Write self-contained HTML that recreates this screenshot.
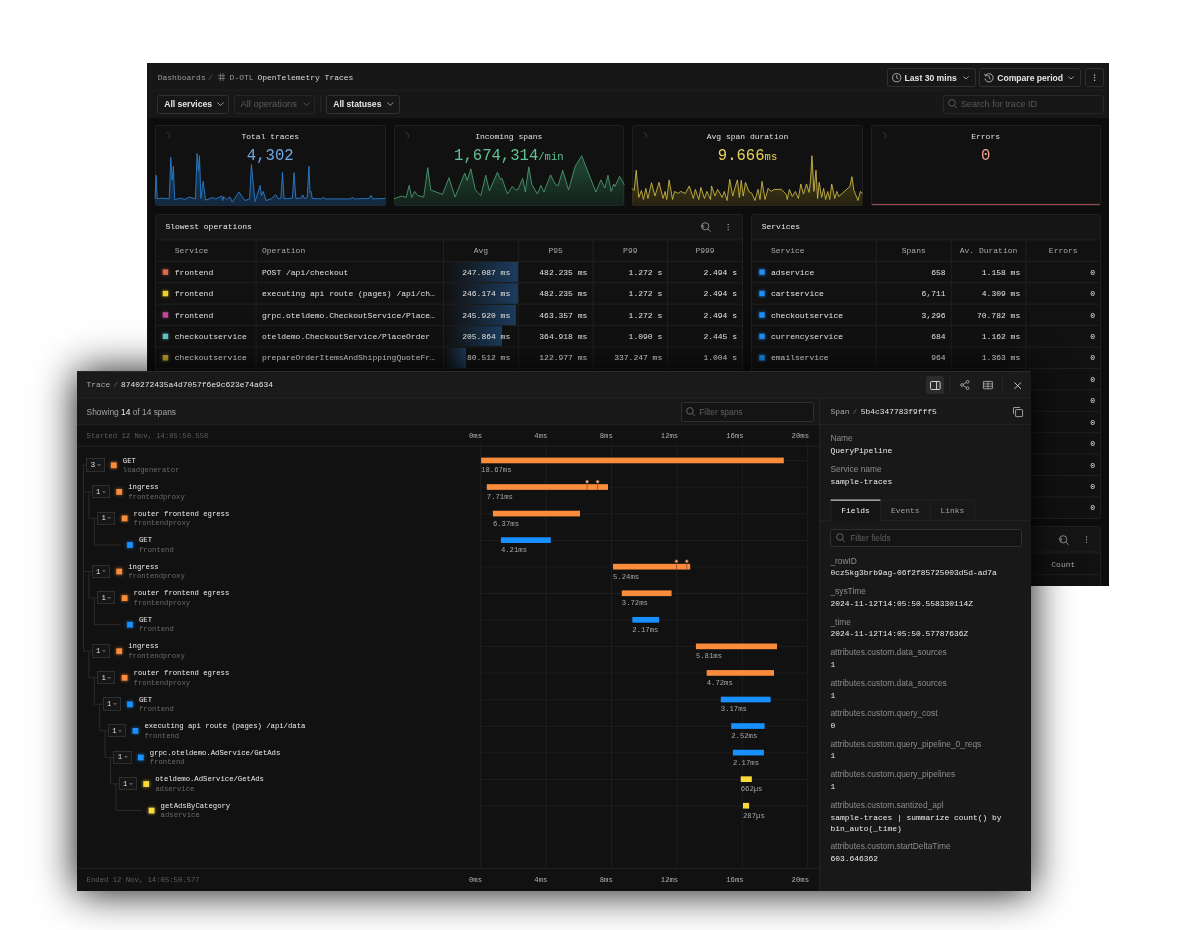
<!DOCTYPE html>
<html lang="en"><head><meta charset="utf-8"><title>OpenTelemetry Traces</title>
<style>
html,body{margin:0;padding:0;background:#fff}
body{width:1188px;height:930px;position:relative;overflow:hidden}
.pn{position:absolute;overflow:hidden}
.pn div,.pn svg{position:absolute}
.tl{left:0;top:0;width:100%;height:100%;will-change:transform}
.m{font-family:"Liberation Mono","DejaVu Sans Mono",monospace;font-size:7.92px;white-space:nowrap;letter-spacing:0}
.s{font-family:"Liberation Sans","DejaVu Sans",sans-serif;font-size:8.6px;white-space:nowrap}
#front .s{font-size:8.4px}
.sb{font-weight:bold}
svg{overflow:visible}
.ly{left:0;top:0}
</style></head>
<body>
<div class="pn" id="back" style="left:147px;top:63px;width:962px;height:523px;background:#0d0d0d">
<div style="left:0.00px;top:0.00px;width:962.00px;height:55.00px;background:#171717"></div>
<svg style="left:71.10px;top:10.40px;" width="7.4" height="8.2" viewBox="0 0 7.4 8.2"><path d="M2.4 0.2V8M5.0 0.2V8M0.2 2.7H7.2M0.2 5.5H7.2" stroke="#808080" stroke-width="0.8" fill="none"/></svg>
<div style="left:740.40px;top:5.30px;width:88.20px;height:18.40px;border:1px solid #303030;border-radius:2.5px;background:transparent;box-sizing:border-box"></div>
<svg style="left:744.90px;top:10.10px;" width="9.4" height="9.4" viewBox="0 0 9.4 9.4"><circle cx="4.7" cy="4.7" r="4.1" stroke="#ccc" stroke-width="0.8" fill="none"/><path d="M4.7 2.2V4.9L6.4 5.9" stroke="#ccc" stroke-width="0.8" fill="none"/></svg>
<svg style="left:816.20px;top:13.00px;" width="6.0" height="4.0" viewBox="0 0 6.0 4.0"><path d="M0.4 0.5L3.00 3.00L5.60 0.5" stroke="#aaa" stroke-width="0.9" fill="none"/></svg>
<div style="left:832.40px;top:5.30px;width:101.40px;height:18.40px;border:1px solid #303030;border-radius:2.5px;background:transparent;box-sizing:border-box"></div>
<svg style="left:837.00px;top:10.00px;" width="9.8" height="9.6" viewBox="0 0 9.8 9.6"><path d="M1.6 2.6A4.1 4.1 0 1 1 1.0 5.6" stroke="#ccc" stroke-width="0.8" fill="none"/><path d="M0.6 0.9L1.5 2.9L3.6 2.5" stroke="#ccc" stroke-width="0.8" fill="none"/><path d="M5 2.4V5L6.6 6" stroke="#ccc" stroke-width="0.8" fill="none"/></svg>
<svg style="left:921.00px;top:13.00px;" width="6.0" height="4.0" viewBox="0 0 6.0 4.0"><path d="M0.4 0.5L3.00 3.00L5.60 0.5" stroke="#aaa" stroke-width="0.9" fill="none"/></svg>
<div style="left:938.40px;top:5.30px;width:18.40px;height:18.40px;border:1px solid #303030;border-radius:2.5px;background:transparent;box-sizing:border-box"></div>
<div style="left:10.40px;top:31.50px;width:72.10px;height:19.30px;border:1px solid #303030;border-radius:2.5px;background:transparent;box-sizing:border-box"></div>
<svg style="left:70.00px;top:39.35px;" width="7.0" height="4.5" viewBox="0 0 7.0 4.5"><path d="M0.4 0.5L3.50 3.50L6.60 0.5" stroke="#aaa" stroke-width="0.9" fill="none"/></svg>
<div style="left:86.70px;top:31.50px;width:81.10px;height:19.30px;border:1px solid #262626;border-radius:2.5px;background:transparent;box-sizing:border-box"></div>
<svg style="left:155.50px;top:39.33px;" width="7.100000000000023" height="4.550000000000011" viewBox="0 0 7.100000000000023 4.550000000000011"><path d="M0.4 0.5L3.55 3.55L6.70 0.5" stroke="#555" stroke-width="0.9" fill="none"/></svg>
<div style="left:179.40px;top:31.50px;width:73.30px;height:19.30px;border:1px solid #303030;border-radius:2.5px;background:transparent;box-sizing:border-box"></div>
<svg style="left:239.70px;top:39.45px;" width="6.600000000000023" height="4.300000000000011" viewBox="0 0 6.600000000000023 4.300000000000011"><path d="M0.4 0.5L3.30 3.30L6.20 0.5" stroke="#aaa" stroke-width="0.9" fill="none"/></svg>
<div style="left:796.30px;top:31.50px;width:160.50px;height:19.30px;border:1px solid #282828;border-radius:2.5px;background:transparent;box-sizing:border-box"></div>
<svg style="left:801.00px;top:36.40px;" width="9.4" height="9.6" viewBox="0 0 9.4 9.6"><circle cx="3.9" cy="3.9" r="3.3" stroke="#666" stroke-width="0.8" fill="none"/><path d="M6.3 6.4L8.9 9.1" stroke="#666" stroke-width="0.8" fill="none"/></svg>
<div style="left:0.00px;top:55.00px;width:962.00px;height:468.00px;background:#0d0d0d"></div>
<div style="left:8.00px;top:62.30px;width:230.50px;height:80.50px;background:#111111;border:1px solid #202020;border-radius:2.5px;box-sizing:border-box;overflow:hidden"></div>
<svg style="left:8.00px;top:62.30px;" width="230.50" height="80.50" viewBox="0 0 230.50 80.50"><defs><linearGradient id="g0" x1="0" y1="0" x2="0" y2="1"><stop offset="0.3" stop-color="rgba(26,92,160,0.55)"/><stop offset="1" stop-color="rgba(22,72,128,0.42)"/></linearGradient></defs><polygon points="0.00,80.50 0.05,73.89 1.06,50.26 2.27,73.89 7.12,73.08 14.19,73.89 15.81,32.48 17.22,55.31 18.43,41.16 19.65,74.50 26.31,73.08 29.34,74.50 34.39,72.07 40.45,73.89 42.07,28.44 43.48,45.21 44.49,30.66 45.91,73.49 48.13,56.32 50.56,75.10 57.63,72.48 60.66,73.89 66.72,71.06 67.73,75.51 68.74,71.47 71.77,74.50 74.80,71.87 77.42,77.12 83.89,67.02 89.95,75.51 94.60,73.89 96.41,39.55 100.05,76.52 105.10,60.36 106.52,70.46 108.13,66.42 111.16,75.51 116.21,73.89 120.66,69.45 123.28,73.89 125.91,73.08 127.53,47.23 129.14,73.89 137.42,73.08 139.04,47.63 140.86,73.49 146.11,73.08 147.73,69.85 149.34,73.49 152.17,72.48 153.99,41.16 155.00,67.43 156.01,66.42 157.22,73.49 166.72,73.89 168.33,72.07 169.95,73.89 196.01,73.89 197.42,72.07 199.04,73.89 214.19,73.49 216.01,70.46 217.83,73.89 230.35,73.49 230.50,80.50" fill="url(#g0)"/><polyline points="0.05,73.89 1.06,50.26 2.27,73.89 7.12,73.08 14.19,73.89 15.81,32.48 17.22,55.31 18.43,41.16 19.65,74.50 26.31,73.08 29.34,74.50 34.39,72.07 40.45,73.89 42.07,28.44 43.48,45.21 44.49,30.66 45.91,73.49 48.13,56.32 50.56,75.10 57.63,72.48 60.66,73.89 66.72,71.06 67.73,75.51 68.74,71.47 71.77,74.50 74.80,71.87 77.42,77.12 83.89,67.02 89.95,75.51 94.60,73.89 96.41,39.55 100.05,76.52 105.10,60.36 106.52,70.46 108.13,66.42 111.16,75.51 116.21,73.89 120.66,69.45 123.28,73.89 125.91,73.08 127.53,47.23 129.14,73.89 137.42,73.08 139.04,47.63 140.86,73.49 146.11,73.08 147.73,69.85 149.34,73.49 152.17,72.48 153.99,41.16 155.00,67.43 156.01,66.42 157.22,73.49 166.72,73.89 168.33,72.07 169.95,73.89 196.01,73.89 197.42,72.07 199.04,73.89 214.19,73.49 216.01,70.46 217.83,73.89 230.35,73.49" fill="none" stroke="#2a7fd0" stroke-width="0.85" stroke-linejoin="round"/></svg>
<svg style="left:16.00px;top:69.00px;" width="8" height="8" viewBox="0 0 8 8"><path d="M3.4 0.6A3.3 3.3 0 0 1 5.6 6.4" stroke="#3c3c3c" stroke-width="0.9" fill="none"/></svg>
<div style="left:246.60px;top:62.30px;width:230.40px;height:80.50px;background:#111111;border:1px solid #202020;border-radius:2.5px;box-sizing:border-box;overflow:hidden"></div>
<svg style="left:246.60px;top:62.30px;" width="230.40" height="80.50" viewBox="0 0 230.40 80.50"><defs><linearGradient id="g1" x1="0" y1="0" x2="0" y2="1"><stop offset="0.3" stop-color="rgba(40,104,72,0.55)"/><stop offset="1" stop-color="rgba(28,70,50,0.30)"/></linearGradient></defs><polygon points="0.00,80.50 0.04,73.89 7.51,71.06 12.16,72.48 15.19,60.36 17.61,72.48 20.64,66.42 23.67,70.46 29.73,72.07 33.77,42.58 36.80,65.00 48.52,69.45 54.99,52.68 61.05,72.07 70.74,48.24 73.17,55.31 76.80,43.79 81.25,64.40 83.27,67.02 86.91,70.46 91.75,50.26 95.39,65.81 103.47,47.23 106.50,54.30 107.92,53.29 113.57,69.04 118.22,61.37 121.65,65.00 124.08,64.40 128.72,53.29 131.35,67.02 134.78,41.77 137.81,59.35 143.47,69.04 146.91,60.36 149.94,67.02 156.60,49.85 161.05,58.94 164.08,60.96 168.72,45.21 174.58,65.00 181.25,41.16 187.71,30.66 201.85,67.02 206.91,54.90 210.95,62.98 213.98,50.26 217.21,66.42 219.63,58.94 221.05,61.37 225.69,51.27 230.34,59.75 230.40,80.50" fill="url(#g1)"/><polyline points="0.04,73.89 7.51,71.06 12.16,72.48 15.19,60.36 17.61,72.48 20.64,66.42 23.67,70.46 29.73,72.07 33.77,42.58 36.80,65.00 48.52,69.45 54.99,52.68 61.05,72.07 70.74,48.24 73.17,55.31 76.80,43.79 81.25,64.40 83.27,67.02 86.91,70.46 91.75,50.26 95.39,65.81 103.47,47.23 106.50,54.30 107.92,53.29 113.57,69.04 118.22,61.37 121.65,65.00 124.08,64.40 128.72,53.29 131.35,67.02 134.78,41.77 137.81,59.35 143.47,69.04 146.91,60.36 149.94,67.02 156.60,49.85 161.05,58.94 164.08,60.96 168.72,45.21 174.58,65.00 181.25,41.16 187.71,30.66 201.85,67.02 206.91,54.90 210.95,62.98 213.98,50.26 217.21,66.42 219.63,58.94 221.05,61.37 225.69,51.27 230.34,59.75" fill="none" stroke="#4c9c74" stroke-width="0.85" stroke-linejoin="round"/></svg>
<svg style="left:254.60px;top:69.00px;" width="8" height="8" viewBox="0 0 8 8"><path d="M3.4 0.6A3.3 3.3 0 0 1 5.6 6.4" stroke="#3c3c3c" stroke-width="0.9" fill="none"/></svg>
<div style="left:485.30px;top:62.30px;width:230.40px;height:80.50px;background:#111111;border:1px solid #202020;border-radius:2.5px;box-sizing:border-box;overflow:hidden"></div>
<svg style="left:485.30px;top:62.30px;" width="230.40" height="80.50" viewBox="0 0 230.40 80.50"><defs><linearGradient id="g2" x1="0" y1="0" x2="0" y2="1"><stop offset="0.3" stop-color="rgba(128,110,26,0.55)"/><stop offset="1" stop-color="rgba(84,72,16,0.32)"/></linearGradient></defs><polygon points="0.00,80.50 0.14,63.39 2.16,65.41 4.18,45.21 6.81,72.48 9.44,65.41 11.46,74.50 13.88,63.39 15.90,73.49 19.54,57.73 22.97,71.06 27.01,57.33 31.05,73.49 33.07,66.42 34.69,74.50 37.11,54.90 40.55,74.50 42.57,66.42 46.21,68.44 48.63,66.42 53.28,68.44 57.32,60.96 61.36,73.49 63.38,64.40 66.81,74.50 68.83,62.38 72.47,73.49 74.89,66.42 78.53,74.50 79.54,60.96 82.97,71.06 85.60,64.40 90.25,72.48 92.27,66.42 95.09,75.51 97.72,54.30 100.75,71.06 102.77,63.39 105.40,54.90 107.42,72.48 109.24,55.31 111.26,71.06 113.48,57.33 116.91,66.42 119.94,68.44 122.97,75.51 126.00,64.40 128.02,74.50 130.04,56.32 133.07,74.50 136.10,63.39 139.13,66.42 142.16,64.40 149.24,64.40 154.29,69.45 155.30,74.50 157.32,64.40 160.35,71.47 163.38,66.42 166.41,73.49 168.83,58.94 171.46,69.04 174.49,58.94 177.11,67.43 178.53,55.31 179.94,30.66 181.96,66.42 183.98,45.21 185.60,73.49 187.22,57.33 189.64,72.48 191.66,63.39 193.68,74.50 195.70,66.42 197.72,74.50 199.74,58.94 202.77,73.49 204.79,66.42 206.81,71.47 217.92,61.37 219.94,51.67 221.96,65.41 226.00,75.51 228.43,66.42 230.40,68.44 230.40,80.50" fill="url(#g2)"/><polyline points="0.14,63.39 2.16,65.41 4.18,45.21 6.81,72.48 9.44,65.41 11.46,74.50 13.88,63.39 15.90,73.49 19.54,57.73 22.97,71.06 27.01,57.33 31.05,73.49 33.07,66.42 34.69,74.50 37.11,54.90 40.55,74.50 42.57,66.42 46.21,68.44 48.63,66.42 53.28,68.44 57.32,60.96 61.36,73.49 63.38,64.40 66.81,74.50 68.83,62.38 72.47,73.49 74.89,66.42 78.53,74.50 79.54,60.96 82.97,71.06 85.60,64.40 90.25,72.48 92.27,66.42 95.09,75.51 97.72,54.30 100.75,71.06 102.77,63.39 105.40,54.90 107.42,72.48 109.24,55.31 111.26,71.06 113.48,57.33 116.91,66.42 119.94,68.44 122.97,75.51 126.00,64.40 128.02,74.50 130.04,56.32 133.07,74.50 136.10,63.39 139.13,66.42 142.16,64.40 149.24,64.40 154.29,69.45 155.30,74.50 157.32,64.40 160.35,71.47 163.38,66.42 166.41,73.49 168.83,58.94 171.46,69.04 174.49,58.94 177.11,67.43 178.53,55.31 179.94,30.66 181.96,66.42 183.98,45.21 185.60,73.49 187.22,57.33 189.64,72.48 191.66,63.39 193.68,74.50 195.70,66.42 197.72,74.50 199.74,58.94 202.77,73.49 204.79,66.42 206.81,71.47 217.92,61.37 219.94,51.67 221.96,65.41 226.00,75.51 228.43,66.42 230.40,68.44" fill="none" stroke="#d2bc48" stroke-width="0.85" stroke-linejoin="round"/></svg>
<svg style="left:493.30px;top:69.00px;" width="8" height="8" viewBox="0 0 8 8"><path d="M3.4 0.6A3.3 3.3 0 0 1 5.6 6.4" stroke="#3c3c3c" stroke-width="0.9" fill="none"/></svg>
<div style="left:723.50px;top:62.30px;width:230.20px;height:80.50px;background:#111111;border:1px solid #202020;border-radius:2.5px;box-sizing:border-box;overflow:hidden"></div>
<svg style="left:731.50px;top:69.00px;" width="8" height="8" viewBox="0 0 8 8"><path d="M3.4 0.6A3.3 3.3 0 0 1 5.6 6.4" stroke="#3c3c3c" stroke-width="0.9" fill="none"/></svg>
<div style="left:8.00px;top:151.10px;width:587.50px;height:385.90px;background:#111111;border:1px solid #202020;border-radius:2.5px;box-sizing:border-box"></div>
<div style="left:9.00px;top:152.10px;width:585.50px;height:24.80px;background:#151515"></div>
<svg style="left:553.60px;top:159.10px;" width="10" height="10.4" viewBox="0 0 10 10.4"><circle cx="4.2" cy="4.3" r="3.6" stroke="#a6a6a6" stroke-width="0.8" fill="none"/><path d="M6.9 7L9.6 9.8" stroke="#a6a6a6" stroke-width="0.8" fill="none"/><path d="M0.2 3.4H3.2M0.2 4.6H3.2M1.0 5.8H3.2" stroke="#a6a6a6" stroke-width="0.55" fill="none"/></svg>
<div style="left:297.00px;top:198.82px;width:74.00px;height:20.42px;background:linear-gradient(90deg,rgba(28,58,90,0) 0%,rgba(28,58,90,0.3) 30%,rgba(28,60,94,1) 100%)"></div>
<div style="left:297.00px;top:220.24px;width:73.80px;height:20.42px;background:linear-gradient(90deg,rgba(28,58,90,0) 0%,rgba(28,58,90,0.3) 30%,rgba(28,60,94,1) 100%)"></div>
<div style="left:297.00px;top:241.66px;width:72.20px;height:20.42px;background:linear-gradient(90deg,rgba(28,58,90,0) 0%,rgba(28,58,90,0.3) 30%,rgba(28,60,94,1) 100%)"></div>
<div style="left:297.00px;top:263.08px;width:57.60px;height:20.42px;background:linear-gradient(90deg,rgba(28,58,90,0) 0%,rgba(28,58,90,0.3) 30%,rgba(28,60,94,1) 100%)"></div>
<div style="left:297.00px;top:284.50px;width:22.40px;height:20.42px;background:linear-gradient(90deg,rgba(28,58,90,0) 0%,rgba(28,58,90,0.3) 30%,rgba(28,60,94,1) 100%)"></div>
<div style="left:604.30px;top:151.10px;width:349.40px;height:304.50px;background:#111111;border:1px solid #202020;border-radius:2.5px;box-sizing:border-box"></div>
<div style="left:605.30px;top:152.10px;width:347.40px;height:24.80px;background:#151515"></div>
<div style="left:604.30px;top:463.20px;width:349.40px;height:113.80px;background:#111111;border:1px solid #202020;border-radius:2.5px;box-sizing:border-box"></div>
<div style="left:605.30px;top:464.20px;width:347.40px;height:24.80px;background:#151515"></div>
<svg style="left:911.60px;top:471.60px;" width="10" height="10.4" viewBox="0 0 10 10.4"><circle cx="4.2" cy="4.3" r="3.6" stroke="#a6a6a6" stroke-width="0.8" fill="none"/><path d="M6.9 7L9.6 9.8" stroke="#a6a6a6" stroke-width="0.8" fill="none"/><path d="M0.2 3.4H3.2M0.2 4.6H3.2M1.0 5.8H3.2" stroke="#a6a6a6" stroke-width="0.55" fill="none"/></svg>
<div style="left:0.00px;top:27.50px;width:1.20px;height:495.50px;background:#161616"></div>
<svg class="ly" width="962" height="523" viewBox="0 0 962 523"><defs><filter id="bl" x="-50%" y="-50%" width="200%" height="200%"><feGaussianBlur stdDeviation="1.1"/></filter><pattern id="pt" width="1.8" height="1.8" patternUnits="userSpaceOnUse"><rect width="1.8" height="1.8" fill="#7fd6b8"/><circle cx="0.9" cy="0.9" r="0.55" fill="#2a86e8"/></pattern></defs>
<rect x="0.00" y="26.80" width="962.00" height="1.00" fill="#202020" />
<circle cx="947.60" cy="12.00" r="0.7" fill="#d0d0d0"/>
<circle cx="947.60" cy="14.60" r="0.7" fill="#d0d0d0"/>
<circle cx="947.60" cy="17.20" r="0.7" fill="#d0d0d0"/>
<rect x="173.20" y="33.00" width="1.00" height="16.50" fill="#2a2a2a" />
<rect x="724.50" y="140.90" width="228.20" height="1.00" fill="#a8505a" />
<rect x="8.00" y="176.40" width="587.50" height="1.00" fill="#202020" />
<circle cx="581.20" cy="161.50" r="0.65" fill="#b0b0b0"/>
<circle cx="581.20" cy="164.10" r="0.65" fill="#b0b0b0"/>
<circle cx="581.20" cy="166.70" r="0.65" fill="#b0b0b0"/>
<rect x="9.00" y="197.82" width="585.50" height="1.00" fill="#202020" />
<rect x="9.00" y="219.24" width="585.50" height="1.00" fill="#202020" />
<rect x="9.00" y="240.66" width="585.50" height="1.00" fill="#202020" />
<rect x="9.00" y="262.08" width="585.50" height="1.00" fill="#202020" />
<rect x="9.00" y="283.50" width="585.50" height="1.00" fill="#202020" />
<rect x="9.00" y="304.92" width="585.50" height="1.00" fill="#202020" />
<rect x="9.00" y="326.34" width="585.50" height="1.00" fill="#202020" />
<rect x="9.00" y="347.76" width="585.50" height="1.00" fill="#202020" />
<rect x="9.00" y="369.18" width="585.50" height="1.00" fill="#202020" />
<rect x="9.00" y="390.60" width="585.50" height="1.00" fill="#202020" />
<rect x="9.00" y="412.02" width="585.50" height="1.00" fill="#202020" />
<rect x="9.00" y="433.44" width="585.50" height="1.00" fill="#202020" />
<rect x="9.00" y="454.86" width="585.50" height="1.00" fill="#202020" />
<rect x="9.00" y="476.28" width="585.50" height="1.00" fill="#202020" />
<rect x="9.00" y="497.70" width="585.50" height="1.00" fill="#202020" />
<rect x="9.00" y="519.12" width="585.50" height="1.00" fill="#202020" />
<rect x="108.60" y="176.90" width="1.00" height="360.10" fill="#202020" />
<rect x="296.00" y="176.90" width="1.00" height="360.10" fill="#202020" />
<rect x="370.90" y="176.90" width="1.00" height="360.10" fill="#202020" />
<rect x="445.50" y="176.90" width="1.00" height="360.10" fill="#202020" />
<rect x="520.10" y="176.90" width="1.00" height="360.10" fill="#202020" />
<rect x="14.40" y="205.08" width="8.10" height="8.10" rx="2" fill="#e0694a" opacity="0.22" filter="url(#bl)"/>
<rect x="15.70" y="206.38" width="5.50" height="5.50" fill="#e0694a" />
<rect x="14.40" y="226.50" width="8.10" height="8.10" rx="2" fill="#f2d02c" opacity="0.22" filter="url(#bl)"/>
<rect x="15.70" y="227.80" width="5.50" height="5.50" fill="#f2d02c" />
<rect x="14.40" y="247.92" width="8.10" height="8.10" rx="2" fill="#c2489a" opacity="0.22" filter="url(#bl)"/>
<rect x="15.70" y="249.22" width="5.50" height="5.50" fill="#c2489a" />
<rect x="14.40" y="269.34" width="8.10" height="8.10" rx="2" fill="#3fb0b4" opacity="0.22" filter="url(#bl)"/>
<rect x="15.70" y="270.64" width="5.50" height="5.50" fill="url(#pt)" />
<rect x="14.40" y="290.76" width="8.10" height="8.10" rx="2" fill="#c8aa2e" opacity="0.22" filter="url(#bl)"/>
<rect x="15.70" y="292.06" width="5.50" height="5.50" fill="#c8aa2e" />
<rect x="604.30" y="176.40" width="349.40" height="1.00" fill="#202020" />
<rect x="605.30" y="197.82" width="347.40" height="1.00" fill="#202020" />
<rect x="605.30" y="219.24" width="347.40" height="1.00" fill="#202020" />
<rect x="605.30" y="240.66" width="347.40" height="1.00" fill="#202020" />
<rect x="605.30" y="262.08" width="347.40" height="1.00" fill="#202020" />
<rect x="605.30" y="283.50" width="347.40" height="1.00" fill="#202020" />
<rect x="605.30" y="304.92" width="347.40" height="1.00" fill="#202020" />
<rect x="605.30" y="326.34" width="347.40" height="1.00" fill="#202020" />
<rect x="605.30" y="347.76" width="347.40" height="1.00" fill="#202020" />
<rect x="605.30" y="369.18" width="347.40" height="1.00" fill="#202020" />
<rect x="605.30" y="390.60" width="347.40" height="1.00" fill="#202020" />
<rect x="605.30" y="412.02" width="347.40" height="1.00" fill="#202020" />
<rect x="605.30" y="433.44" width="347.40" height="1.00" fill="#202020" />
<rect x="728.80" y="176.90" width="1.00" height="278.70" fill="#202020" />
<rect x="803.70" y="176.90" width="1.00" height="278.70" fill="#202020" />
<rect x="878.30" y="176.90" width="1.00" height="278.70" fill="#202020" />
<rect x="611.00" y="205.13" width="8.00" height="8.00" rx="2" fill="#1e8ff5" opacity="0.3" filter="url(#bl)"/>
<rect x="612.30" y="206.43" width="5.40" height="5.40" fill="#1e8ff5" />
<rect x="611.00" y="226.55" width="8.00" height="8.00" rx="2" fill="#1e8ff5" opacity="0.3" filter="url(#bl)"/>
<rect x="612.30" y="227.85" width="5.40" height="5.40" fill="#1e8ff5" />
<rect x="611.00" y="247.97" width="8.00" height="8.00" rx="2" fill="#1e8ff5" opacity="0.3" filter="url(#bl)"/>
<rect x="612.30" y="249.27" width="5.40" height="5.40" fill="#1e8ff5" />
<rect x="611.00" y="269.39" width="8.00" height="8.00" rx="2" fill="#1e8ff5" opacity="0.3" filter="url(#bl)"/>
<rect x="612.30" y="270.69" width="5.40" height="5.40" fill="#1e8ff5" />
<rect x="611.00" y="290.81" width="8.00" height="8.00" rx="2" fill="#1e8ff5" opacity="0.3" filter="url(#bl)"/>
<rect x="612.30" y="292.11" width="5.40" height="5.40" fill="#1e8ff5" />
<rect x="611.00" y="312.23" width="8.00" height="8.00" rx="2" fill="#1e8ff5" opacity="0.3" filter="url(#bl)"/>
<rect x="612.30" y="313.53" width="5.40" height="5.40" fill="#1e8ff5" />
<rect x="611.00" y="333.65" width="8.00" height="8.00" rx="2" fill="#1e8ff5" opacity="0.3" filter="url(#bl)"/>
<rect x="612.30" y="334.95" width="5.40" height="5.40" fill="#1e8ff5" />
<rect x="611.00" y="355.07" width="8.00" height="8.00" rx="2" fill="#1e8ff5" opacity="0.3" filter="url(#bl)"/>
<rect x="612.30" y="356.37" width="5.40" height="5.40" fill="#1e8ff5" />
<rect x="611.00" y="376.49" width="8.00" height="8.00" rx="2" fill="#1e8ff5" opacity="0.3" filter="url(#bl)"/>
<rect x="612.30" y="377.79" width="5.40" height="5.40" fill="#1e8ff5" />
<rect x="611.00" y="397.91" width="8.00" height="8.00" rx="2" fill="#1e8ff5" opacity="0.3" filter="url(#bl)"/>
<rect x="612.30" y="399.21" width="5.40" height="5.40" fill="#1e8ff5" />
<rect x="611.00" y="419.33" width="8.00" height="8.00" rx="2" fill="#1e8ff5" opacity="0.3" filter="url(#bl)"/>
<rect x="612.30" y="420.63" width="5.40" height="5.40" fill="#1e8ff5" />
<rect x="611.00" y="440.75" width="8.00" height="8.00" rx="2" fill="#1e8ff5" opacity="0.3" filter="url(#bl)"/>
<rect x="612.30" y="442.05" width="5.40" height="5.40" fill="#1e8ff5" />
<rect x="604.30" y="488.50" width="349.40" height="1.00" fill="#202020" />
<rect x="604.30" y="489.70" width="349.40" height="1.00" fill="#202020" />
<circle cx="939.50" cy="474.00" r="0.65" fill="#b0b0b0"/>
<circle cx="939.50" cy="476.60" r="0.65" fill="#b0b0b0"/>
<circle cx="939.50" cy="479.20" r="0.65" fill="#b0b0b0"/>
<rect x="605.30" y="511.20" width="347.40" height="1.00" fill="#202020" />
<rect x="878.30" y="490.00" width="1.00" height="47.00" fill="#202020" />
</svg>
<div class="tl">
<div class="m" style="left:10.70px;top:9.90px;line-height:10px;font-size:8.0px;color:#9a9a9a">Dashboards</div>
<div class="m" style="left:61.00px;top:9.90px;line-height:10px;font-size:8.0px;color:#5a5a5a">/</div>
<div class="m" style="left:82.60px;top:9.90px;line-height:10px;font-size:8.0px;color:#9a9a9a">D-OTL</div>
<div class="m" style="left:110.40px;top:9.90px;line-height:10px;font-size:8.0px;color:#d8d8d8">OpenTelemetry Traces</div>
<div class="s sb" style="left:757.60px;top:9.60px;line-height:10px;color:#e6e6e6">Last 30 mins</div>
<div class="s sb" style="left:850.20px;top:9.60px;line-height:10px;color:#e6e6e6">Compare period</div>
<div class="s sb" style="left:17.20px;top:36.20px;line-height:10px;color:#e6e6e6">All services</div>
<div class="s" style="left:93.60px;top:36.20px;line-height:10px;color:#5c5c5c;font-size:9.3px">All operations</div>
<div class="s sb" style="left:186.20px;top:36.20px;line-height:10px;color:#e6e6e6">All statuses</div>
<div class="s" style="left:813.80px;top:36.20px;line-height:10px;color:#585858;font-size:9.1px">Search for trace ID</div>
<div class="m" style="left:-76.75px;width:400px;text-align:center;top:68.60px;line-height:10px;font-size:8.0px;color:#e0e0e0">Total traces</div>
<div class="m" style="left:-76.75px;width:400px;text-align:center;top:83.60px;line-height:18px;font-size:8.0px;color:#6ea8e6;font-size:15.6px">4,302</div>
<div class="m" style="left:161.80px;width:400px;text-align:center;top:68.60px;line-height:10px;font-size:8.0px;color:#e0e0e0">Incoming spans</div>
<div class="m" style="left:161.80px;width:400px;text-align:center;top:83.60px;line-height:18px;font-size:8.0px;color:#62c296;font-size:15.6px">1,674,314<span style="font-size:10.5px">/min</span></div>
<div class="m" style="left:400.50px;width:400px;text-align:center;top:68.60px;line-height:10px;font-size:8.0px;color:#e0e0e0">Avg span duration</div>
<div class="m" style="left:400.50px;width:400px;text-align:center;top:83.60px;line-height:18px;font-size:8.0px;color:#ecd35a;font-size:15.6px">9.666<span style="font-size:10.5px">ms</span></div>
<div class="m" style="left:638.60px;width:400px;text-align:center;top:68.60px;line-height:10px;font-size:8.0px;color:#e0e0e0">Errors</div>
<div class="m" style="left:638.60px;width:400px;text-align:center;top:83.60px;line-height:18px;font-size:8.0px;color:#f0a08c;font-size:15.6px">0</div>
<div class="m" style="left:18.40px;top:159.40px;line-height:10px;font-size:8.0px;color:#e6e6e6">Slowest operations</div>
<div class="m" style="left:27.80px;top:183.41px;line-height:10px;font-size:8.0px;color:#a8a8a8">Service</div>
<div class="m" style="left:115.00px;top:183.41px;line-height:10px;font-size:8.0px;color:#a8a8a8">Operation</div>
<div class="m" style="left:133.95px;width:400px;text-align:center;top:183.41px;line-height:10px;font-size:8.0px;color:#a8a8a8">Avg</div>
<div class="m" style="left:208.70px;width:400px;text-align:center;top:183.41px;line-height:10px;font-size:8.0px;color:#a8a8a8">P95</div>
<div class="m" style="left:283.30px;width:400px;text-align:center;top:183.41px;line-height:10px;font-size:8.0px;color:#a8a8a8">P99</div>
<div class="m" style="left:358.05px;width:400px;text-align:center;top:183.41px;line-height:10px;font-size:8.0px;color:#a8a8a8">P999</div>
<div class="m" style="left:27.80px;top:204.73px;line-height:10px;font-size:8.0px;color:#e2e2e2">frontend</div>
<div class="m" style="left:115.00px;top:204.73px;line-height:10px;font-size:8.0px;color:#e2e2e2">POST /api/checkout</div>
<div class="m" style="left:-36.80px;width:400px;text-align:right;top:204.73px;line-height:10px;font-size:8.0px;color:#e2e2e2">247.087 ms</div>
<div class="m" style="left:40.30px;width:400px;text-align:right;top:204.73px;line-height:10px;font-size:8.0px;color:#e2e2e2">482.235 ms</div>
<div class="m" style="left:115.20px;width:400px;text-align:right;top:204.73px;line-height:10px;font-size:8.0px;color:#e2e2e2">1.272 s</div>
<div class="m" style="left:190.00px;width:400px;text-align:right;top:204.73px;line-height:10px;font-size:8.0px;color:#e2e2e2">2.494 s</div>
<div class="m" style="left:27.80px;top:226.15px;line-height:10px;font-size:8.0px;color:#e2e2e2">frontend</div>
<div class="m" style="left:115.00px;top:226.15px;line-height:10px;font-size:8.0px;color:#e2e2e2">executing api route (pages) /api/ch…</div>
<div class="m" style="left:-36.80px;width:400px;text-align:right;top:226.15px;line-height:10px;font-size:8.0px;color:#e2e2e2">246.174 ms</div>
<div class="m" style="left:40.30px;width:400px;text-align:right;top:226.15px;line-height:10px;font-size:8.0px;color:#e2e2e2">482.235 ms</div>
<div class="m" style="left:115.20px;width:400px;text-align:right;top:226.15px;line-height:10px;font-size:8.0px;color:#e2e2e2">1.272 s</div>
<div class="m" style="left:190.00px;width:400px;text-align:right;top:226.15px;line-height:10px;font-size:8.0px;color:#e2e2e2">2.494 s</div>
<div class="m" style="left:27.80px;top:247.57px;line-height:10px;font-size:8.0px;color:#e2e2e2">frontend</div>
<div class="m" style="left:115.00px;top:247.57px;line-height:10px;font-size:8.0px;color:#e2e2e2">grpc.oteldemo.CheckoutService/Place…</div>
<div class="m" style="left:-36.80px;width:400px;text-align:right;top:247.57px;line-height:10px;font-size:8.0px;color:#e2e2e2">245.920 ms</div>
<div class="m" style="left:40.30px;width:400px;text-align:right;top:247.57px;line-height:10px;font-size:8.0px;color:#e2e2e2">463.357 ms</div>
<div class="m" style="left:115.20px;width:400px;text-align:right;top:247.57px;line-height:10px;font-size:8.0px;color:#e2e2e2">1.272 s</div>
<div class="m" style="left:190.00px;width:400px;text-align:right;top:247.57px;line-height:10px;font-size:8.0px;color:#e2e2e2">2.494 s</div>
<div class="m" style="left:27.80px;top:268.99px;line-height:10px;font-size:8.0px;color:#e2e2e2">checkoutservice</div>
<div class="m" style="left:115.00px;top:268.99px;line-height:10px;font-size:8.0px;color:#e2e2e2">oteldemo.CheckoutService/PlaceOrder</div>
<div class="m" style="left:-36.80px;width:400px;text-align:right;top:268.99px;line-height:10px;font-size:8.0px;color:#e2e2e2">205.864 ms</div>
<div class="m" style="left:40.30px;width:400px;text-align:right;top:268.99px;line-height:10px;font-size:8.0px;color:#e2e2e2">364.918 ms</div>
<div class="m" style="left:115.20px;width:400px;text-align:right;top:268.99px;line-height:10px;font-size:8.0px;color:#e2e2e2">1.090 s</div>
<div class="m" style="left:190.00px;width:400px;text-align:right;top:268.99px;line-height:10px;font-size:8.0px;color:#e2e2e2">2.445 s</div>
<div class="m" style="left:27.80px;top:290.41px;line-height:10px;font-size:8.0px;color:#e2e2e2">checkoutservice</div>
<div class="m" style="left:115.00px;top:290.41px;line-height:10px;font-size:8.0px;color:#e2e2e2">prepareOrderItemsAndShippingQuoteFr…</div>
<div class="m" style="left:-36.80px;width:400px;text-align:right;top:290.41px;line-height:10px;font-size:8.0px;color:#e2e2e2">80.512 ms</div>
<div class="m" style="left:40.30px;width:400px;text-align:right;top:290.41px;line-height:10px;font-size:8.0px;color:#e2e2e2">122.977 ms</div>
<div class="m" style="left:115.20px;width:400px;text-align:right;top:290.41px;line-height:10px;font-size:8.0px;color:#e2e2e2">337.247 ms</div>
<div class="m" style="left:190.00px;width:400px;text-align:right;top:290.41px;line-height:10px;font-size:8.0px;color:#e2e2e2">1.004 s</div>
<div class="m" style="left:614.70px;top:159.40px;line-height:10px;font-size:8.0px;color:#e6e6e6">Services</div>
<div class="m" style="left:624.00px;top:183.41px;line-height:10px;font-size:8.0px;color:#a8a8a8">Service</div>
<div class="m" style="left:566.75px;width:400px;text-align:center;top:183.41px;line-height:10px;font-size:8.0px;color:#a8a8a8">Spans</div>
<div class="m" style="left:641.50px;width:400px;text-align:center;top:183.41px;line-height:10px;font-size:8.0px;color:#a8a8a8">Av. Duration</div>
<div class="m" style="left:716.25px;width:400px;text-align:center;top:183.41px;line-height:10px;font-size:8.0px;color:#a8a8a8">Errors</div>
<div class="m" style="left:624.00px;top:204.73px;line-height:10px;font-size:8.0px;color:#e2e2e2">adservice</div>
<div class="m" style="left:398.60px;width:400px;text-align:right;top:204.73px;line-height:10px;font-size:8.0px;color:#e2e2e2">658</div>
<div class="m" style="left:473.20px;width:400px;text-align:right;top:204.73px;line-height:10px;font-size:8.0px;color:#e2e2e2">1.158 ms</div>
<div class="m" style="left:548.00px;width:400px;text-align:right;top:204.73px;line-height:10px;font-size:8.0px;color:#e2e2e2">0</div>
<div class="m" style="left:624.00px;top:226.15px;line-height:10px;font-size:8.0px;color:#e2e2e2">cartservice</div>
<div class="m" style="left:398.60px;width:400px;text-align:right;top:226.15px;line-height:10px;font-size:8.0px;color:#e2e2e2">6,711</div>
<div class="m" style="left:473.20px;width:400px;text-align:right;top:226.15px;line-height:10px;font-size:8.0px;color:#e2e2e2">4.309 ms</div>
<div class="m" style="left:548.00px;width:400px;text-align:right;top:226.15px;line-height:10px;font-size:8.0px;color:#e2e2e2">0</div>
<div class="m" style="left:624.00px;top:247.57px;line-height:10px;font-size:8.0px;color:#e2e2e2">checkoutservice</div>
<div class="m" style="left:398.60px;width:400px;text-align:right;top:247.57px;line-height:10px;font-size:8.0px;color:#e2e2e2">3,296</div>
<div class="m" style="left:473.20px;width:400px;text-align:right;top:247.57px;line-height:10px;font-size:8.0px;color:#e2e2e2">70.782 ms</div>
<div class="m" style="left:548.00px;width:400px;text-align:right;top:247.57px;line-height:10px;font-size:8.0px;color:#e2e2e2">0</div>
<div class="m" style="left:624.00px;top:268.99px;line-height:10px;font-size:8.0px;color:#e2e2e2">currencyservice</div>
<div class="m" style="left:398.60px;width:400px;text-align:right;top:268.99px;line-height:10px;font-size:8.0px;color:#e2e2e2">684</div>
<div class="m" style="left:473.20px;width:400px;text-align:right;top:268.99px;line-height:10px;font-size:8.0px;color:#e2e2e2">1.162 ms</div>
<div class="m" style="left:548.00px;width:400px;text-align:right;top:268.99px;line-height:10px;font-size:8.0px;color:#e2e2e2">0</div>
<div class="m" style="left:624.00px;top:290.41px;line-height:10px;font-size:8.0px;color:#e2e2e2">emailservice</div>
<div class="m" style="left:398.60px;width:400px;text-align:right;top:290.41px;line-height:10px;font-size:8.0px;color:#e2e2e2">964</div>
<div class="m" style="left:473.20px;width:400px;text-align:right;top:290.41px;line-height:10px;font-size:8.0px;color:#e2e2e2">1.363 ms</div>
<div class="m" style="left:548.00px;width:400px;text-align:right;top:290.41px;line-height:10px;font-size:8.0px;color:#e2e2e2">0</div>
<div class="m" style="left:624.00px;top:311.83px;line-height:10px;font-size:8.0px;color:#e2e2e2">frauddetectionservice</div>
<div class="m" style="left:398.60px;width:400px;text-align:right;top:311.83px;line-height:10px;font-size:8.0px;color:#e2e2e2">312</div>
<div class="m" style="left:473.20px;width:400px;text-align:right;top:311.83px;line-height:10px;font-size:8.0px;color:#e2e2e2">2.204 ms</div>
<div class="m" style="left:548.00px;width:400px;text-align:right;top:311.83px;line-height:10px;font-size:8.0px;color:#e2e2e2">0</div>
<div class="m" style="left:624.00px;top:333.25px;line-height:10px;font-size:8.0px;color:#e2e2e2">frontend</div>
<div class="m" style="left:398.60px;width:400px;text-align:right;top:333.25px;line-height:10px;font-size:8.0px;color:#e2e2e2">8,412</div>
<div class="m" style="left:473.20px;width:400px;text-align:right;top:333.25px;line-height:10px;font-size:8.0px;color:#e2e2e2">12.118 ms</div>
<div class="m" style="left:548.00px;width:400px;text-align:right;top:333.25px;line-height:10px;font-size:8.0px;color:#e2e2e2">0</div>
<div class="m" style="left:624.00px;top:354.67px;line-height:10px;font-size:8.0px;color:#e2e2e2">frontendproxy</div>
<div class="m" style="left:398.60px;width:400px;text-align:right;top:354.67px;line-height:10px;font-size:8.0px;color:#e2e2e2">4,206</div>
<div class="m" style="left:473.20px;width:400px;text-align:right;top:354.67px;line-height:10px;font-size:8.0px;color:#e2e2e2">6.337 ms</div>
<div class="m" style="left:548.00px;width:400px;text-align:right;top:354.67px;line-height:10px;font-size:8.0px;color:#e2e2e2">0</div>
<div class="m" style="left:624.00px;top:376.09px;line-height:10px;font-size:8.0px;color:#e2e2e2">loadgenerator</div>
<div class="m" style="left:398.60px;width:400px;text-align:right;top:376.09px;line-height:10px;font-size:8.0px;color:#e2e2e2">2,103</div>
<div class="m" style="left:473.20px;width:400px;text-align:right;top:376.09px;line-height:10px;font-size:8.0px;color:#e2e2e2">18.442 ms</div>
<div class="m" style="left:548.00px;width:400px;text-align:right;top:376.09px;line-height:10px;font-size:8.0px;color:#e2e2e2">0</div>
<div class="m" style="left:624.00px;top:397.51px;line-height:10px;font-size:8.0px;color:#e2e2e2">paymentservice</div>
<div class="m" style="left:398.60px;width:400px;text-align:right;top:397.51px;line-height:10px;font-size:8.0px;color:#e2e2e2">421</div>
<div class="m" style="left:473.20px;width:400px;text-align:right;top:397.51px;line-height:10px;font-size:8.0px;color:#e2e2e2">1.902 ms</div>
<div class="m" style="left:548.00px;width:400px;text-align:right;top:397.51px;line-height:10px;font-size:8.0px;color:#e2e2e2">0</div>
<div class="m" style="left:624.00px;top:418.93px;line-height:10px;font-size:8.0px;color:#e2e2e2">productcatalogservice</div>
<div class="m" style="left:398.60px;width:400px;text-align:right;top:418.93px;line-height:10px;font-size:8.0px;color:#e2e2e2">5,120</div>
<div class="m" style="left:473.20px;width:400px;text-align:right;top:418.93px;line-height:10px;font-size:8.0px;color:#e2e2e2">1.044 ms</div>
<div class="m" style="left:548.00px;width:400px;text-align:right;top:418.93px;line-height:10px;font-size:8.0px;color:#e2e2e2">0</div>
<div class="m" style="left:624.00px;top:440.35px;line-height:10px;font-size:8.0px;color:#e2e2e2">quoteservice</div>
<div class="m" style="left:398.60px;width:400px;text-align:right;top:440.35px;line-height:10px;font-size:8.0px;color:#e2e2e2">298</div>
<div class="m" style="left:473.20px;width:400px;text-align:right;top:440.35px;line-height:10px;font-size:8.0px;color:#e2e2e2">3.310 ms</div>
<div class="m" style="left:548.00px;width:400px;text-align:right;top:440.35px;line-height:10px;font-size:8.0px;color:#e2e2e2">0</div>
<div class="m" style="left:614.70px;top:471.50px;line-height:10px;font-size:8.0px;color:#e6e6e6">Operations</div>
<div class="m" style="left:716.30px;width:400px;text-align:center;top:496.80px;line-height:10px;font-size:8.0px;color:#a8a8a8">Count</div>
</div>
</div>
<div id="shadow" style="position:absolute;left:77px;top:370.8px;width:954px;height:520px;box-shadow:0 1px 38px rgba(0,0,0,0.95)"></div>
<div class="pn" id="front" style="left:77px;top:370.8px;width:954px;height:520px;background:#111111">
<div style="left:0.00px;top:0.00px;width:954.00px;height:27.20px;background:#1a1a1a"></div>
<div style="left:848.80px;top:5.20px;width:18.60px;height:18.40px;background:#2b2b2b;border-radius:2.5px"></div>
<svg style="left:852.80px;top:10.00px;" width="10.6" height="9.2" viewBox="0 0 10.6 9.2"><rect x="0.5" y="0.5" width="9.6" height="8.0" rx="1" stroke="#e4e4e4" stroke-width="0.9" fill="none"/><path d="M6.6 0.5V8.5" stroke="#e4e4e4" stroke-width="0.9"/></svg>
<svg style="left:883.00px;top:9.40px;" width="10" height="10" viewBox="0 0 10 10"><circle cx="7.6" cy="1.8" r="1.35" stroke="#bdbdbd" stroke-width="0.75" fill="none"/><circle cx="2.0" cy="5.0" r="1.35" stroke="#bdbdbd" stroke-width="0.75" fill="none"/><circle cx="7.6" cy="8.2" r="1.35" stroke="#bdbdbd" stroke-width="0.75" fill="none"/><path d="M3.2 4.3L6.4 2.5M3.2 5.7L6.4 7.5" stroke="#bdbdbd" stroke-width="0.75"/></svg>
<svg style="left:906.00px;top:10.40px;" width="9.8" height="8.4" viewBox="0 0 9.8 8.4"><rect x="0.4" y="0.4" width="9" height="7.4" rx="0.6" stroke="#bdbdbd" stroke-width="0.8" fill="none"/><path d="M4.9 0.4V7.8M0.4 2.9H9.4M0.4 5.3H9.4" stroke="#bdbdbd" stroke-width="0.7"/></svg>
<svg style="left:936.80px;top:11.10px;" width="7.4" height="7.4" viewBox="0 0 7.4 7.4"><path d="M0.4 0.4L7 7M7 0.4L0.4 7" stroke="#d0d0d0" stroke-width="0.9"/></svg>
<div style="left:0.00px;top:27.70px;width:954.00px;height:492.30px;background:#111111"></div>
<div style="left:0.00px;top:27.70px;width:742.50px;height:26.10px;background:#181818"></div>
<div style="left:742.50px;top:27.70px;width:211.50px;height:492.30px;background:#181818"></div>
<div style="left:604.40px;top:31.70px;width:133.00px;height:19.10px;border:1px solid #303030;border-radius:2.5px;background:#141414;box-sizing:border-box"></div>
<svg style="left:609.40px;top:36.60px;" width="9.4" height="9.6" viewBox="0 0 9.4 9.6"><circle cx="3.9" cy="3.9" r="3.3" stroke="#777" stroke-width="0.8" fill="none"/><path d="M6.3 6.4L8.9 9.1" stroke="#777" stroke-width="0.8" fill="none"/></svg>
<div style="left:9.40px;top:87.60px;width:18.20px;height:13.20px;border:1px solid #2e2e2e;box-sizing:border-box;background:#161616"></div>
<svg style="left:19.60px;top:93.30px;" width="4" height="2.6" viewBox="0 0 4 2.6"><path d="M0 0H4L2 2.4Z" fill="#555"/></svg>
<div style="left:14.80px;top:114.16px;width:18.20px;height:13.20px;border:1px solid #2e2e2e;box-sizing:border-box;background:#161616"></div>
<svg style="left:25.00px;top:119.86px;" width="4" height="2.6" viewBox="0 0 4 2.6"><path d="M0 0H4L2 2.4Z" fill="#555"/></svg>
<div style="left:20.20px;top:140.72px;width:18.20px;height:13.20px;border:1px solid #2e2e2e;box-sizing:border-box;background:#161616"></div>
<svg style="left:30.40px;top:146.42px;" width="4" height="2.6" viewBox="0 0 4 2.6"><path d="M0 0H4L2 2.4Z" fill="#555"/></svg>
<div style="left:14.80px;top:193.84px;width:18.20px;height:13.20px;border:1px solid #2e2e2e;box-sizing:border-box;background:#161616"></div>
<svg style="left:25.00px;top:199.54px;" width="4" height="2.6" viewBox="0 0 4 2.6"><path d="M0 0H4L2 2.4Z" fill="#555"/></svg>
<div style="left:20.20px;top:220.40px;width:18.20px;height:13.20px;border:1px solid #2e2e2e;box-sizing:border-box;background:#161616"></div>
<svg style="left:30.40px;top:226.10px;" width="4" height="2.6" viewBox="0 0 4 2.6"><path d="M0 0H4L2 2.4Z" fill="#555"/></svg>
<div style="left:14.80px;top:273.52px;width:18.20px;height:13.20px;border:1px solid #2e2e2e;box-sizing:border-box;background:#161616"></div>
<svg style="left:25.00px;top:279.22px;" width="4" height="2.6" viewBox="0 0 4 2.6"><path d="M0 0H4L2 2.4Z" fill="#555"/></svg>
<div style="left:20.20px;top:300.08px;width:18.20px;height:13.20px;border:1px solid #2e2e2e;box-sizing:border-box;background:#161616"></div>
<svg style="left:30.40px;top:305.78px;" width="4" height="2.6" viewBox="0 0 4 2.6"><path d="M0 0H4L2 2.4Z" fill="#555"/></svg>
<div style="left:25.60px;top:326.64px;width:18.20px;height:13.20px;border:1px solid #2e2e2e;box-sizing:border-box;background:#161616"></div>
<svg style="left:35.80px;top:332.34px;" width="4" height="2.6" viewBox="0 0 4 2.6"><path d="M0 0H4L2 2.4Z" fill="#555"/></svg>
<div style="left:31.00px;top:353.20px;width:18.20px;height:13.20px;border:1px solid #2e2e2e;box-sizing:border-box;background:#161616"></div>
<svg style="left:41.20px;top:358.90px;" width="4" height="2.6" viewBox="0 0 4 2.6"><path d="M0 0H4L2 2.4Z" fill="#555"/></svg>
<div style="left:36.40px;top:379.76px;width:18.20px;height:13.20px;border:1px solid #2e2e2e;box-sizing:border-box;background:#161616"></div>
<svg style="left:46.60px;top:385.46px;" width="4" height="2.6" viewBox="0 0 4 2.6"><path d="M0 0H4L2 2.4Z" fill="#555"/></svg>
<div style="left:41.80px;top:406.32px;width:18.20px;height:13.20px;border:1px solid #2e2e2e;box-sizing:border-box;background:#161616"></div>
<svg style="left:52.00px;top:412.02px;" width="4" height="2.6" viewBox="0 0 4 2.6"><path d="M0 0H4L2 2.4Z" fill="#555"/></svg>
<svg style="left:935.60px;top:36.10px;" width="10.2" height="10.2" viewBox="0 0 10.2 10.2"><rect x="2.6" y="2.6" width="7" height="7" rx="0.6" stroke="#bdbdbd" stroke-width="0.8" fill="none"/><path d="M0.5 7V1.1A0.6 0.6 0 0 1 1.1 0.5H7" stroke="#bdbdbd" stroke-width="0.8" fill="none"/></svg>
<div style="left:753.60px;top:128.70px;width:49.80px;height:21.50px;background:#141414"></div>
<div style="left:753.20px;top:158.00px;width:191.60px;height:18.20px;border:1px solid #303030;border-radius:2.5px;background:#141414;box-sizing:border-box"></div>
<svg style="left:759.20px;top:162.60px;" width="9.4" height="9.6" viewBox="0 0 9.4 9.6"><circle cx="3.9" cy="3.9" r="3.3" stroke="#777" stroke-width="0.8" fill="none"/><path d="M6.3 6.4L8.9 9.1" stroke="#777" stroke-width="0.8" fill="none"/></svg>
<svg class="ly" width="954" height="520" viewBox="0 0 954 520">
<rect x="0.00" y="26.70" width="954.00" height="1.00" fill="#232323" />
<rect x="872.30" y="6.40" width="1.00" height="15.40" fill="#2a2a2a" />
<rect x="924.80" y="6.40" width="1.00" height="15.40" fill="#2a2a2a" />
<rect x="0.00" y="0.00" width="954.00" height="1.00" fill="#2a2a2a" />
<rect x="0.00" y="53.30" width="742.50" height="1.00" fill="#232323" />
<rect x="0.00" y="74.70" width="742.50" height="1.00" fill="#232323" />
<rect x="403.20" y="72.20" width="1.00" height="425.40" fill="#1e1e1e" />
<rect x="468.60" y="72.20" width="1.00" height="425.40" fill="#1e1e1e" />
<rect x="534.00" y="72.20" width="1.00" height="425.40" fill="#1e1e1e" />
<rect x="599.40" y="72.20" width="1.00" height="425.40" fill="#1e1e1e" />
<rect x="664.80" y="72.20" width="1.00" height="425.40" fill="#1e1e1e" />
<rect x="730.20" y="72.20" width="1.00" height="425.40" fill="#1e1e1e" />
<rect x="0.00" y="497.10" width="742.50" height="1.00" fill="#232323" />
<rect x="742.00" y="27.70" width="1.00" height="492.30" fill="#232323" />
<rect x="6.00" y="94.20" width="1.00" height="185.92" fill="#2b2b2b" />
<rect x="4.70" y="93.70" width="4.70" height="1.00" fill="#2b2b2b" />
<rect x="11.40" y="120.76" width="1.00" height="26.56" fill="#2b2b2b" />
<rect x="6.50" y="120.26" width="8.30" height="1.00" fill="#2b2b2b" />
<rect x="16.80" y="147.32" width="1.00" height="26.56" fill="#2b2b2b" />
<rect x="11.90" y="146.82" width="8.30" height="1.00" fill="#2b2b2b" />
<rect x="17.30" y="173.38" width="26.30" height="1.00" fill="#2b2b2b" />
<rect x="11.40" y="200.44" width="1.00" height="26.56" fill="#2b2b2b" />
<rect x="6.50" y="199.94" width="8.30" height="1.00" fill="#2b2b2b" />
<rect x="16.80" y="227.00" width="1.00" height="26.56" fill="#2b2b2b" />
<rect x="11.90" y="226.50" width="8.30" height="1.00" fill="#2b2b2b" />
<rect x="17.30" y="253.06" width="26.30" height="1.00" fill="#2b2b2b" />
<rect x="11.40" y="280.12" width="1.00" height="26.56" fill="#2b2b2b" />
<rect x="6.50" y="279.62" width="8.30" height="1.00" fill="#2b2b2b" />
<rect x="16.80" y="306.68" width="1.00" height="26.56" fill="#2b2b2b" />
<rect x="11.90" y="306.18" width="8.30" height="1.00" fill="#2b2b2b" />
<rect x="22.20" y="333.24" width="1.00" height="26.56" fill="#2b2b2b" />
<rect x="17.30" y="332.74" width="8.30" height="1.00" fill="#2b2b2b" />
<rect x="27.60" y="359.80" width="1.00" height="26.56" fill="#2b2b2b" />
<rect x="22.70" y="359.30" width="8.30" height="1.00" fill="#2b2b2b" />
<rect x="33.00" y="386.36" width="1.00" height="26.56" fill="#2b2b2b" />
<rect x="28.10" y="385.86" width="8.30" height="1.00" fill="#2b2b2b" />
<rect x="38.40" y="412.92" width="1.00" height="26.56" fill="#2b2b2b" />
<rect x="33.50" y="412.42" width="8.30" height="1.00" fill="#2b2b2b" />
<rect x="38.90" y="438.98" width="26.30" height="1.00" fill="#2b2b2b" />
<rect x="32.60" y="90.10" width="8.40" height="8.40" rx="2" fill="#fa8c3c" opacity="0.28" filter="url(#bl)"/>
<rect x="33.90" y="91.40" width="5.80" height="5.80" fill="#fa8c3c" />
<rect x="403.70" y="89.20" width="327.00" height="1.00" fill="#1e1e1e" />
<rect x="404.10" y="86.60" width="302.70" height="5.70" fill="#fa8c3c" />
<rect x="38.00" y="116.66" width="8.40" height="8.40" rx="2" fill="#fa8c3c" opacity="0.28" filter="url(#bl)"/>
<rect x="39.30" y="117.96" width="5.80" height="5.80" fill="#fa8c3c" />
<rect x="403.70" y="115.76" width="327.00" height="1.00" fill="#1e1e1e" />
<rect x="409.80" y="113.16" width="121.20" height="5.70" fill="#fa8c3c" />
<rect x="509.70" y="113.16" width="0.80" height="5.70" fill="#9a4428" />
<circle cx="510.10" cy="110.66" r="2.0" fill="#fa8c3c" opacity="0.35"/><circle cx="510.10" cy="110.66" r="1.05" fill="#ffc9a8"/>
<rect x="520.20" y="113.16" width="0.80" height="5.70" fill="#9a4428" />
<circle cx="520.60" cy="110.66" r="2.0" fill="#fa8c3c" opacity="0.35"/><circle cx="520.60" cy="110.66" r="1.05" fill="#ffc9a8"/>
<rect x="43.40" y="143.22" width="8.40" height="8.40" rx="2" fill="#fa8c3c" opacity="0.28" filter="url(#bl)"/>
<rect x="44.70" y="144.52" width="5.80" height="5.80" fill="#fa8c3c" />
<rect x="403.70" y="142.32" width="327.00" height="1.00" fill="#1e1e1e" />
<rect x="415.90" y="139.72" width="87.10" height="5.70" fill="#fa8c3c" />
<rect x="48.80" y="169.78" width="8.40" height="8.40" rx="2" fill="#1890ff" opacity="0.28" filter="url(#bl)"/>
<rect x="50.10" y="171.08" width="5.80" height="5.80" fill="#1890ff" />
<rect x="403.70" y="168.88" width="327.00" height="1.00" fill="#1e1e1e" />
<rect x="423.90" y="166.28" width="49.90" height="5.70" fill="#1890ff" />
<rect x="38.00" y="196.34" width="8.40" height="8.40" rx="2" fill="#fa8c3c" opacity="0.28" filter="url(#bl)"/>
<rect x="39.30" y="197.64" width="5.80" height="5.80" fill="#fa8c3c" />
<rect x="403.70" y="195.44" width="327.00" height="1.00" fill="#1e1e1e" />
<rect x="536.00" y="192.84" width="77.20" height="5.70" fill="#fa8c3c" />
<rect x="599.00" y="192.84" width="0.80" height="5.70" fill="#9a4428" />
<circle cx="599.40" cy="190.34" r="2.0" fill="#fa8c3c" opacity="0.35"/><circle cx="599.40" cy="190.34" r="1.05" fill="#ffc9a8"/>
<rect x="609.40" y="192.84" width="0.80" height="5.70" fill="#9a4428" />
<circle cx="609.80" cy="190.34" r="2.0" fill="#fa8c3c" opacity="0.35"/><circle cx="609.80" cy="190.34" r="1.05" fill="#ffc9a8"/>
<rect x="43.40" y="222.90" width="8.40" height="8.40" rx="2" fill="#fa8c3c" opacity="0.28" filter="url(#bl)"/>
<rect x="44.70" y="224.20" width="5.80" height="5.80" fill="#fa8c3c" />
<rect x="403.70" y="222.00" width="327.00" height="1.00" fill="#1e1e1e" />
<rect x="544.80" y="219.40" width="49.80" height="5.70" fill="#fa8c3c" />
<rect x="48.80" y="249.46" width="8.40" height="8.40" rx="2" fill="#1890ff" opacity="0.28" filter="url(#bl)"/>
<rect x="50.10" y="250.76" width="5.80" height="5.80" fill="#1890ff" />
<rect x="403.70" y="248.56" width="327.00" height="1.00" fill="#1e1e1e" />
<rect x="555.30" y="245.96" width="26.90" height="5.70" fill="#1890ff" />
<rect x="38.00" y="276.02" width="8.40" height="8.40" rx="2" fill="#fa8c3c" opacity="0.28" filter="url(#bl)"/>
<rect x="39.30" y="277.32" width="5.80" height="5.80" fill="#fa8c3c" />
<rect x="403.70" y="275.12" width="327.00" height="1.00" fill="#1e1e1e" />
<rect x="618.90" y="272.52" width="81.10" height="5.70" fill="#fa8c3c" />
<rect x="43.40" y="302.58" width="8.40" height="8.40" rx="2" fill="#fa8c3c" opacity="0.28" filter="url(#bl)"/>
<rect x="44.70" y="303.88" width="5.80" height="5.80" fill="#fa8c3c" />
<rect x="403.70" y="301.68" width="327.00" height="1.00" fill="#1e1e1e" />
<rect x="629.70" y="299.08" width="67.30" height="5.70" fill="#fa8c3c" />
<rect x="48.80" y="329.14" width="8.40" height="8.40" rx="2" fill="#1890ff" opacity="0.28" filter="url(#bl)"/>
<rect x="50.10" y="330.44" width="5.80" height="5.80" fill="#1890ff" />
<rect x="403.70" y="328.24" width="327.00" height="1.00" fill="#1e1e1e" />
<rect x="643.80" y="325.64" width="49.80" height="5.70" fill="#1890ff" />
<rect x="54.20" y="355.70" width="8.40" height="8.40" rx="2" fill="#1890ff" opacity="0.28" filter="url(#bl)"/>
<rect x="55.50" y="357.00" width="5.80" height="5.80" fill="#1890ff" />
<rect x="403.70" y="354.80" width="327.00" height="1.00" fill="#1e1e1e" />
<rect x="654.20" y="352.20" width="33.40" height="5.70" fill="#1890ff" />
<rect x="59.60" y="382.26" width="8.40" height="8.40" rx="2" fill="#1890ff" opacity="0.28" filter="url(#bl)"/>
<rect x="60.90" y="383.56" width="5.80" height="5.80" fill="#1890ff" />
<rect x="403.70" y="381.36" width="327.00" height="1.00" fill="#1e1e1e" />
<rect x="655.90" y="378.76" width="31.00" height="5.70" fill="#1890ff" />
<rect x="65.00" y="408.82" width="8.40" height="8.40" rx="2" fill="#fadb3c" opacity="0.28" filter="url(#bl)"/>
<rect x="66.30" y="410.12" width="5.80" height="5.80" fill="#fadb3c" />
<rect x="403.70" y="407.92" width="327.00" height="1.00" fill="#1e1e1e" />
<rect x="663.70" y="405.32" width="11.10" height="5.70" fill="#fadb3c" />
<rect x="70.40" y="435.38" width="8.40" height="8.40" rx="2" fill="#fadb3c" opacity="0.28" filter="url(#bl)"/>
<rect x="71.70" y="436.68" width="5.80" height="5.80" fill="#fadb3c" />
<rect x="403.70" y="434.48" width="327.00" height="1.00" fill="#1e1e1e" />
<rect x="666.00" y="431.88" width="6.10" height="5.70" fill="#fadb3c" />
<rect x="742.50" y="53.10" width="211.50" height="1.00" fill="#232323" />
<rect x="742.50" y="149.10" width="11.10" height="1.00" fill="#232323" />
<rect x="803.40" y="149.10" width="150.60" height="1.00" fill="#232323" />
<rect x="753.60" y="128.70" width="144.00" height="1.00" fill="#232323" />
<rect x="753.50" y="128.80" width="1.00" height="20.80" fill="#232323" />
<rect x="896.90" y="128.80" width="1.00" height="20.80" fill="#232323" />
<rect x="802.90" y="128.80" width="1.00" height="20.80" fill="#232323" />
<rect x="852.70" y="128.80" width="1.00" height="20.80" fill="#232323" />
<rect x="753.60" y="128.60" width="49.80" height="1.00" fill="#f0f0f0" />
</svg>
<div class="tl">
<div class="m" style="left:9.60px;top:9.40px;line-height:10px;font-size:7.93px;color:#a8a8a8">Trace</div>
<div class="m" style="left:36.20px;top:9.40px;line-height:10px;font-size:7.93px;color:#6a6a6a">/</div>
<div class="m" style="left:43.90px;top:9.40px;line-height:10px;font-size:7.93px;color:#e4e4e4">8740272435a4d7057f6e9c623e74a634</div>
<div class="s" style="left:9.60px;top:36.00px;line-height:10px;color:#ececec"><span style="color:#a4a4a4">Showing </span>14<span style="color:#a4a4a4"> of 14 spans</span></div>
<div class="s" style="left:622.20px;top:36.20px;line-height:10px;color:#606060">Filter spans</div>
<div class="m" style="left:9.60px;top:60.00px;line-height:10px;font-size:7.25px;color:#5e5e5e">Started 12 Nov, 14:05:50.558</div>
<div class="m" style="left:5.00px;width:400px;text-align:right;top:60.00px;line-height:10px;font-size:7.25px;color:#b0b0b0">0ms</div>
<div class="m" style="left:5.00px;width:400px;text-align:right;top:504.10px;line-height:10px;font-size:7.25px;color:#b0b0b0">0ms</div>
<div class="m" style="left:70.40px;width:400px;text-align:right;top:60.00px;line-height:10px;font-size:7.25px;color:#b0b0b0">4ms</div>
<div class="m" style="left:70.40px;width:400px;text-align:right;top:504.10px;line-height:10px;font-size:7.25px;color:#b0b0b0">4ms</div>
<div class="m" style="left:135.80px;width:400px;text-align:right;top:60.00px;line-height:10px;font-size:7.25px;color:#b0b0b0">8ms</div>
<div class="m" style="left:135.80px;width:400px;text-align:right;top:504.10px;line-height:10px;font-size:7.25px;color:#b0b0b0">8ms</div>
<div class="m" style="left:201.20px;width:400px;text-align:right;top:60.00px;line-height:10px;font-size:7.25px;color:#b0b0b0">12ms</div>
<div class="m" style="left:201.20px;width:400px;text-align:right;top:504.10px;line-height:10px;font-size:7.25px;color:#b0b0b0">12ms</div>
<div class="m" style="left:266.60px;width:400px;text-align:right;top:60.00px;line-height:10px;font-size:7.25px;color:#b0b0b0">16ms</div>
<div class="m" style="left:266.60px;width:400px;text-align:right;top:504.10px;line-height:10px;font-size:7.25px;color:#b0b0b0">16ms</div>
<div class="m" style="left:332.00px;width:400px;text-align:right;top:60.00px;line-height:10px;font-size:7.25px;color:#b0b0b0">20ms</div>
<div class="m" style="left:332.00px;width:400px;text-align:right;top:504.10px;line-height:10px;font-size:7.25px;color:#b0b0b0">20ms</div>
<div class="m" style="left:9.60px;top:504.40px;line-height:10px;font-size:7.25px;color:#5e5e5e">Ended 12 Nov, 14:05:50.577</div>
<div class="m" style="left:13.70px;top:89.30px;line-height:10px;font-size:7.25px;color:#e0e0e0">3</div>
<div class="m" style="left:45.80px;top:84.50px;line-height:10px;font-size:7.25px;color:#ececec">GET</div>
<div class="m" style="left:45.80px;top:94.10px;line-height:10px;font-size:7.25px;color:#6a6a6a">loadgenerator</div>
<div class="m" style="left:404.10px;top:94.40px;line-height:10px;font-size:7.25px;color:#a8a8a8">18.67ms</div>
<div class="m" style="left:19.10px;top:115.86px;line-height:10px;font-size:7.25px;color:#e0e0e0">1</div>
<div class="m" style="left:51.20px;top:111.06px;line-height:10px;font-size:7.25px;color:#ececec">ingress</div>
<div class="m" style="left:51.20px;top:120.66px;line-height:10px;font-size:7.25px;color:#6a6a6a">frontendproxy</div>
<div class="m" style="left:409.80px;top:120.96px;line-height:10px;font-size:7.25px;color:#a8a8a8">7.71ms</div>
<div class="m" style="left:24.50px;top:142.42px;line-height:10px;font-size:7.25px;color:#e0e0e0">1</div>
<div class="m" style="left:56.60px;top:137.62px;line-height:10px;font-size:7.25px;color:#ececec">router frontend egress</div>
<div class="m" style="left:56.60px;top:147.22px;line-height:10px;font-size:7.25px;color:#6a6a6a">frontendproxy</div>
<div class="m" style="left:415.90px;top:147.52px;line-height:10px;font-size:7.25px;color:#a8a8a8">6.37ms</div>
<div class="m" style="left:62.00px;top:164.18px;line-height:10px;font-size:7.25px;color:#ececec">GET</div>
<div class="m" style="left:62.00px;top:173.78px;line-height:10px;font-size:7.25px;color:#6a6a6a">frontend</div>
<div class="m" style="left:423.90px;top:174.08px;line-height:10px;font-size:7.25px;color:#a8a8a8">4.21ms</div>
<div class="m" style="left:19.10px;top:195.54px;line-height:10px;font-size:7.25px;color:#e0e0e0">1</div>
<div class="m" style="left:51.20px;top:190.74px;line-height:10px;font-size:7.25px;color:#ececec">ingress</div>
<div class="m" style="left:51.20px;top:200.34px;line-height:10px;font-size:7.25px;color:#6a6a6a">frontendproxy</div>
<div class="m" style="left:536.00px;top:200.64px;line-height:10px;font-size:7.25px;color:#a8a8a8">5.24ms</div>
<div class="m" style="left:24.50px;top:222.10px;line-height:10px;font-size:7.25px;color:#e0e0e0">1</div>
<div class="m" style="left:56.60px;top:217.30px;line-height:10px;font-size:7.25px;color:#ececec">router frontend egress</div>
<div class="m" style="left:56.60px;top:226.90px;line-height:10px;font-size:7.25px;color:#6a6a6a">frontendproxy</div>
<div class="m" style="left:544.80px;top:227.20px;line-height:10px;font-size:7.25px;color:#a8a8a8">3.72ms</div>
<div class="m" style="left:62.00px;top:243.86px;line-height:10px;font-size:7.25px;color:#ececec">GET</div>
<div class="m" style="left:62.00px;top:253.46px;line-height:10px;font-size:7.25px;color:#6a6a6a">frontend</div>
<div class="m" style="left:555.30px;top:253.76px;line-height:10px;font-size:7.25px;color:#a8a8a8">2.17ms</div>
<div class="m" style="left:19.10px;top:275.22px;line-height:10px;font-size:7.25px;color:#e0e0e0">1</div>
<div class="m" style="left:51.20px;top:270.42px;line-height:10px;font-size:7.25px;color:#ececec">ingress</div>
<div class="m" style="left:51.20px;top:280.02px;line-height:10px;font-size:7.25px;color:#6a6a6a">frontendproxy</div>
<div class="m" style="left:618.90px;top:280.32px;line-height:10px;font-size:7.25px;color:#a8a8a8">5.81ms</div>
<div class="m" style="left:24.50px;top:301.78px;line-height:10px;font-size:7.25px;color:#e0e0e0">1</div>
<div class="m" style="left:56.60px;top:296.98px;line-height:10px;font-size:7.25px;color:#ececec">router frontend egress</div>
<div class="m" style="left:56.60px;top:306.58px;line-height:10px;font-size:7.25px;color:#6a6a6a">frontendproxy</div>
<div class="m" style="left:629.70px;top:306.88px;line-height:10px;font-size:7.25px;color:#a8a8a8">4.72ms</div>
<div class="m" style="left:29.90px;top:328.34px;line-height:10px;font-size:7.25px;color:#e0e0e0">1</div>
<div class="m" style="left:62.00px;top:323.54px;line-height:10px;font-size:7.25px;color:#ececec">GET</div>
<div class="m" style="left:62.00px;top:333.14px;line-height:10px;font-size:7.25px;color:#6a6a6a">frontend</div>
<div class="m" style="left:643.80px;top:333.44px;line-height:10px;font-size:7.25px;color:#a8a8a8">3.17ms</div>
<div class="m" style="left:35.30px;top:354.90px;line-height:10px;font-size:7.25px;color:#e0e0e0">1</div>
<div class="m" style="left:67.40px;top:350.10px;line-height:10px;font-size:7.25px;color:#ececec">executing api route (pages) /api/data</div>
<div class="m" style="left:67.40px;top:359.70px;line-height:10px;font-size:7.25px;color:#6a6a6a">frontend</div>
<div class="m" style="left:654.20px;top:360.00px;line-height:10px;font-size:7.25px;color:#a8a8a8">2.52ms</div>
<div class="m" style="left:40.70px;top:381.46px;line-height:10px;font-size:7.25px;color:#e0e0e0">1</div>
<div class="m" style="left:72.80px;top:376.66px;line-height:10px;font-size:7.25px;color:#ececec">grpc.oteldemo.AdService/GetAds</div>
<div class="m" style="left:72.80px;top:386.26px;line-height:10px;font-size:7.25px;color:#6a6a6a">frontend</div>
<div class="m" style="left:655.90px;top:386.56px;line-height:10px;font-size:7.25px;color:#a8a8a8">2.17ms</div>
<div class="m" style="left:46.10px;top:408.02px;line-height:10px;font-size:7.25px;color:#e0e0e0">1</div>
<div class="m" style="left:78.20px;top:403.22px;line-height:10px;font-size:7.25px;color:#ececec">oteldemo.AdService/GetAds</div>
<div class="m" style="left:78.20px;top:412.82px;line-height:10px;font-size:7.25px;color:#6a6a6a">adservice</div>
<div class="m" style="left:663.70px;top:413.12px;line-height:10px;font-size:7.25px;color:#a8a8a8">662µs</div>
<div class="m" style="left:83.60px;top:429.78px;line-height:10px;font-size:7.25px;color:#ececec">getAdsByCategory</div>
<div class="m" style="left:83.60px;top:439.38px;line-height:10px;font-size:7.25px;color:#6a6a6a">adservice</div>
<div class="m" style="left:666.00px;top:439.68px;line-height:10px;font-size:7.25px;color:#a8a8a8">287µs</div>
<div class="m" style="left:753.60px;top:36.20px;line-height:10px;font-size:7.93px;color:#a8a8a8">Span</div>
<div class="m" style="left:775.40px;top:36.20px;line-height:10px;font-size:7.93px;color:#6a6a6a">/</div>
<div class="m" style="left:783.70px;top:36.20px;line-height:10px;font-size:7.93px;color:#e4e4e4">5b4c347783f9fff5</div>
<div class="s" style="left:753.40px;top:62.20px;line-height:10px;color:#8c8c8c">Name</div>
<div class="m" style="left:753.40px;top:74.50px;line-height:10px;font-size:7.93px;color:#ececec">QueryPipeline</div>
<div class="s" style="left:753.40px;top:92.90px;line-height:10px;color:#8c8c8c">Service name</div>
<div class="m" style="left:753.40px;top:105.60px;line-height:10px;font-size:7.93px;color:#ececec">sample-traces</div>
<div class="m" style="left:578.50px;width:400px;text-align:center;top:134.90px;line-height:10px;font-size:7.93px;color:#f0f0f0">Fields</div>
<div class="m" style="left:628.30px;width:400px;text-align:center;top:134.90px;line-height:10px;font-size:7.93px;color:#a0a0a0">Events</div>
<div class="m" style="left:675.40px;width:400px;text-align:center;top:134.90px;line-height:10px;font-size:7.93px;color:#a0a0a0">Links</div>
<div class="s" style="left:773.20px;top:162.20px;line-height:10px;color:#606060">Filter fields</div>
<div class="s" style="left:753.40px;top:184.50px;line-height:10px;color:#8c8c8c">_rowID</div>
<div class="m" style="left:753.40px;top:196.10px;line-height:11px;font-size:7.93px;color:#ececec">0cz5kg3brb9ag-06f2f85725003d5d-ad7a</div>
<div class="s" style="left:753.40px;top:214.90px;line-height:10px;color:#8c8c8c">_sysTime</div>
<div class="m" style="left:753.40px;top:226.50px;line-height:11px;font-size:7.93px;color:#ececec">2024-11-12T14:05:50.558330114Z</div>
<div class="s" style="left:753.40px;top:245.70px;line-height:10px;color:#8c8c8c">_time</div>
<div class="m" style="left:753.40px;top:257.30px;line-height:11px;font-size:7.93px;color:#ececec">2024-11-12T14:05:50.57787636Z</div>
<div class="s" style="left:753.40px;top:276.20px;line-height:10px;color:#8c8c8c">attributes.custom.data_sources</div>
<div class="m" style="left:753.40px;top:287.80px;line-height:11px;font-size:7.93px;color:#ececec">1</div>
<div class="s" style="left:753.40px;top:307.00px;line-height:10px;color:#8c8c8c">attributes.custom.data_sources</div>
<div class="m" style="left:753.40px;top:318.60px;line-height:11px;font-size:7.93px;color:#ececec">1</div>
<div class="s" style="left:753.40px;top:337.40px;line-height:10px;color:#8c8c8c">attributes.custom.query_cost</div>
<div class="m" style="left:753.40px;top:349.00px;line-height:11px;font-size:7.93px;color:#ececec">0</div>
<div class="s" style="left:753.40px;top:367.80px;line-height:10px;color:#8c8c8c">attributes.custom.query_pipeline_0_reqs</div>
<div class="m" style="left:753.40px;top:379.40px;line-height:11px;font-size:7.93px;color:#ececec">1</div>
<div class="s" style="left:753.40px;top:398.40px;line-height:10px;color:#8c8c8c">attributes.custom.query_pipelines</div>
<div class="m" style="left:753.40px;top:410.00px;line-height:11px;font-size:7.93px;color:#ececec">1</div>
<div class="s" style="left:753.40px;top:429.00px;line-height:10px;color:#8c8c8c">attributes.custom.santized_apl</div>
<div class="m" style="left:753.40px;top:440.60px;line-height:11px;font-size:7.93px;color:#ececec">sample-traces | summarize count() by<br>bin_auto(_time)</div>
<div class="s" style="left:753.40px;top:470.00px;line-height:10px;color:#8c8c8c">attributes.custom.startDeltaTime</div>
<div class="m" style="left:753.40px;top:481.60px;line-height:11px;font-size:7.93px;color:#ececec">603.646362</div>
</div>
</div>
</body></html>
